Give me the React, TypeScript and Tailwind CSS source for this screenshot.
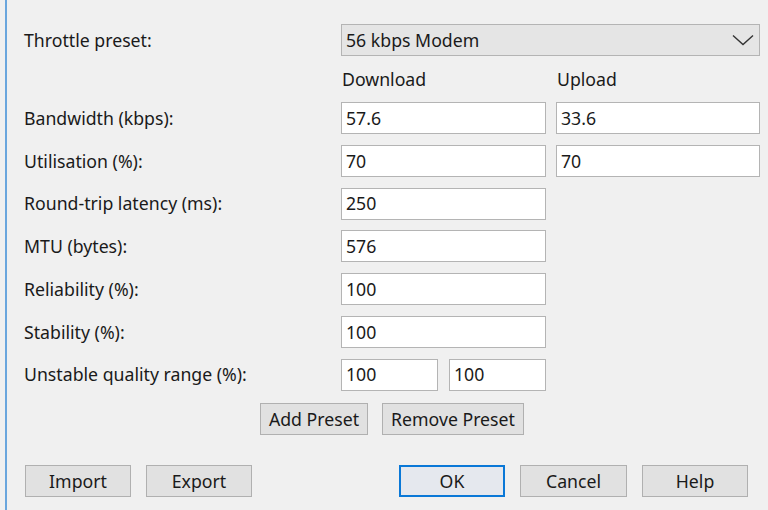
const font = { fontFamily: '"Noto Sans", "Open Sans", sans-serif' };

function Field({ value, className = "" }: { value: string; className?: string }) {
  return (
    <div
      className={`flex h-[32px] items-center border border-[#b4b4b4] bg-white pl-[4px] text-[#1a1a1a] ${className}`}
    >
      {value}
    </div>
  );
}

function Btn({ label, primary = false, className = "" }: { label: string; primary?: boolean; className?: string }) {
  return (
    <div
      className={`flex h-[32px] items-center justify-center text-[#1a1a1a] ${
        primary ? "border-2 border-[#0a78d7] bg-[#e5e8ee]" : "border border-[#b0b0b0] bg-[#e1e1e1]"
      } ${className}`}
    >
      {label}
    </div>
  );
}

const rows: { label: string; down: string; up?: string; split?: [string, string] }[] = [
  { label: "Bandwidth (kbps):", down: "57.6", up: "33.6" },
  { label: "Utilisation (%):", down: "70", up: "70" },
  { label: "Round-trip latency (ms):", down: "250" },
  { label: "MTU (bytes):", down: "576" },
  { label: "Reliability (%):", down: "100" },
  { label: "Stability (%):", down: "100" },
  { label: "Unstable quality range (%):", down: "", split: ["100", "100"] },
];

export default function App() {
  return (
    <div className="flex h-[510px] w-[768px] overflow-hidden bg-[#f0f0f0] text-[17.7px]" style={font}>
      <div className="ml-[5px] w-[2px] shrink-0 bg-[#6aa6dd]" />
      <div className="flex flex-1 flex-col pl-[17px] pt-[24px]">
        <div className="grid grid-cols-[307px_205px_204px] gap-x-[10px] gap-y-[10.7px] text-[#1a1a1a]">
          <div className="flex h-[32px] items-center">Throttle preset:</div>
          <div className="col-span-2 flex h-[32px] items-center justify-between border border-[#b4b4b4] bg-[#e5e5e5] pl-[4px] pr-[5px]">
            <span>56 kbps Modem</span>
            <svg width="22" height="12" viewBox="0 0 22 12" fill="none">
              <polyline points="1,1.5 11,10.5 21,1.5" stroke="#333" strokeWidth="1.4" />
            </svg>
          </div>

          <div />
          <div className="flex h-[25px] items-center pl-[1px]">Download</div>
          <div className="flex h-[25px] items-center pl-[1px]">Upload</div>

          {rows.map((r) => (
            <div key={r.label} className="contents">
              <div className="flex h-[32px] items-center">{r.label}</div>
              {r.split ? (
                <div className="flex gap-x-[11px]">
                  <Field value={r.split[0]} className="w-[97px]" />
                  <Field value={r.split[1]} className="w-[97px]" />
                </div>
              ) : (
                <Field value={r.down} />
              )}
              {r.up ? <Field value={r.up} /> : <div />}
            </div>
          ))}
        </div>

        <div className="mt-[12.6px] flex gap-x-[14px] pl-[236px]">
          <Btn label="Add Preset" className="h-[31px] w-[108px]" />
          <Btn label="Remove Preset" className="h-[31px] w-[142px]" />
        </div>

        <div className="mt-[30px] flex">
          <Btn label="Import" className="ml-[1px] w-[106px]" />
          <Btn label="Export" className="ml-[15px] w-[106px]" />
          <Btn label="OK" primary className="ml-[147px] w-[106px]" />
          <Btn label="Cancel" className="ml-[15px] w-[107px]" />
          <Btn label="Help" className="ml-[15px] w-[106px]" />
        </div>
      </div>
    </div>
  );
}
